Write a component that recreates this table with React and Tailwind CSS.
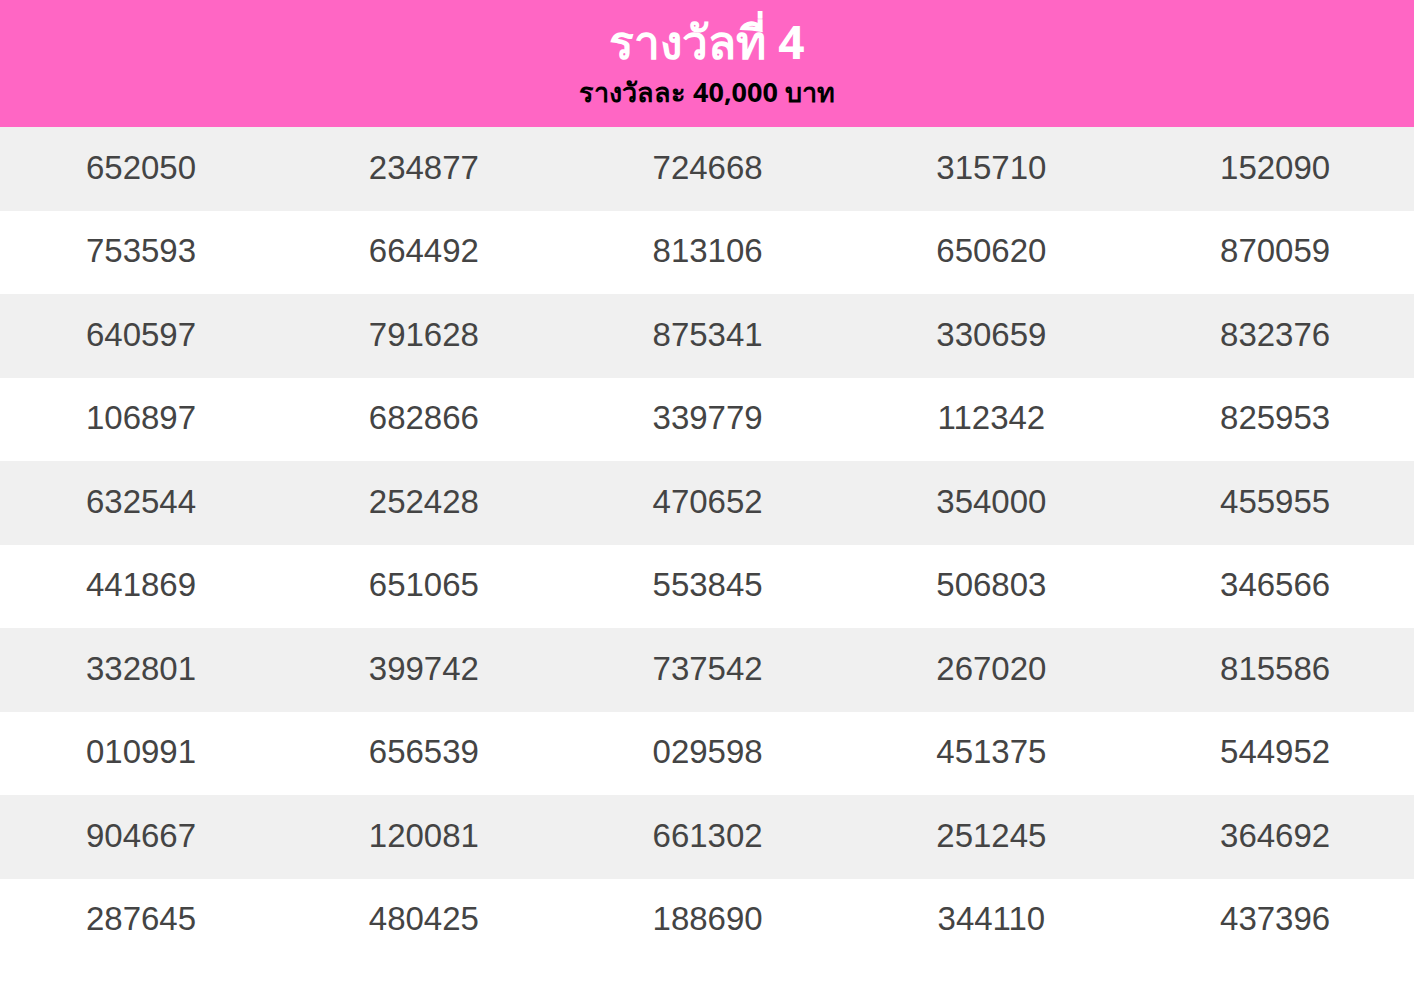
const ROWS = [
  ['652050', '234877', '724668', '315710', '152090'],
  ['753593', '664492', '813106', '650620', '870059'],
  ['640597', '791628', '875341', '330659', '832376'],
  ['106897', '682866', '339779', '112342', '825953'],
  ['632544', '252428', '470652', '354000', '455955'],
  ['441869', '651065', '553845', '506803', '346566'],
  ['332801', '399742', '737542', '267020', '815586'],
  ['010991', '656539', '029598', '451375', '544952'],
  ['904667', '120081', '661302', '251245', '364692'],
  ['287645', '480425', '188690', '344110', '437396'],
];

export default function App() {
  return (
    <div className="w-[1414px] h-[990px] bg-white overflow-hidden">
      <div className="h-[127px] bg-[#ff66c4] flex flex-col items-center pt-[13px] font-['Noto_Sans',sans-serif] font-bold">
        <div className="text-[46px] leading-[56px] text-white">รางวัลที่ 4</div>
        <div className="text-[27px] leading-[36px] text-black mt-[5px]">รางวัลละ 40,000 บาท</div>
      </div>
      <div className="font-['Liberation_Sans',Arial,sans-serif] text-[33px] text-[#444]">
        {ROWS.map((row, i) => (
          <div key={i} className={`grid grid-cols-[282px_repeat(4,283.75px)] h-[83.5px] items-center pb-[3px] ${i % 2 === 0 ? 'bg-[#f0f0f0]' : 'bg-white'}`}>
            {row.map((n) => (
              <div key={n} className="text-center">{n}</div>
            ))}
          </div>
        ))}
      </div>
    </div>
  );
}
